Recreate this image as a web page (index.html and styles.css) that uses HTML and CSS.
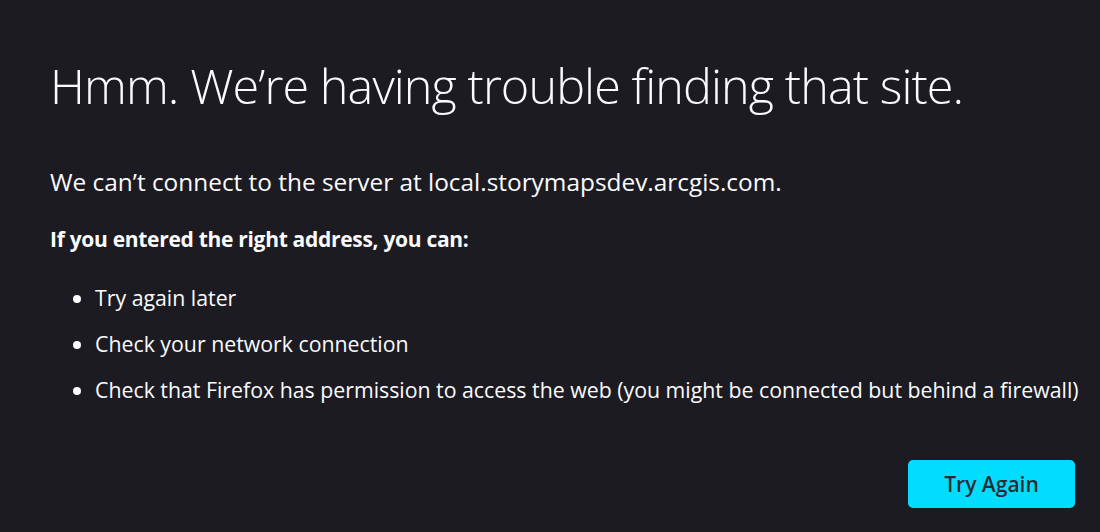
FILE: index.html
```html
<!DOCTYPE html>
<html lang="en">
<head>
    <meta charset="UTF-8">
    <title>Server Not Found</title>
    <link rel="stylesheet" href="styles.css">
</head>
<body>
    <div class="container">
        <h1 class="title">Hmm. We’re having trouble finding that site.</h1>
        <p class="short-desc">We can’t connect to the server at local.storymapsdev.arcgis.com.</p>
        <p class="lead"><strong>If you entered the right address, you can:</strong></p>
        <ul class="tips">
            <li>Try again later</li>
            <li>Check your network connection</li>
            <li>Check that Firefox has permission to access the web (you might be connected but behind a firewall)</li>
        </ul>
        <div class="button-row">
            <button class="primary">Try Again</button>
        </div>
    </div>
</body>
</html>
```

FILE: styles.css
```css
html, body {
    margin: 0;
    background-color: #1c1b22;
    color: #fbfbfe;
    font-family: "Open Sans", "Noto Sans", sans-serif;
}

.container {
    padding: 0 25px 0 50px;
}

.title {
    margin: 0;
    padding-top: 47px;
    font-size: 48.5px;
    font-weight: 300;
    line-height: 76px;
    letter-spacing: -0.9px;
}

.short-desc {
    margin: 42px 0 0;
    font-size: 24.4px;
    line-height: 34px;
}

.lead {
    margin: 24px 0 0;
    font-size: 21px;
    line-height: 32px;
    letter-spacing: -0.3px;
}

.tips {
    margin: 27px 0 0;
    padding-left: 45px;
    font-size: 21.3px;
}

.tips li {
    line-height: 32px;
    margin-bottom: 14px;
    white-space: nowrap;
}

.button-row {
    display: flex;
    justify-content: flex-end;
    margin-top: 54px;
}

.primary {
    width: 167px;
    height: 48px;
    border: none;
    border-radius: 5px;
    background-color: #00ddff;
    color: #2b2a33;
    font-family: inherit;
    font-size: 21px;
    font-weight: 600;
}
```
